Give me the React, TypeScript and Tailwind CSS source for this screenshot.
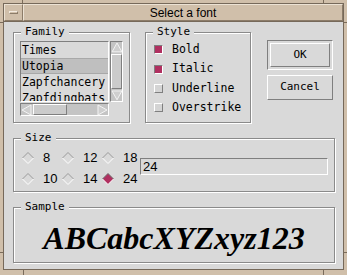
import React from 'react';

const mono = "font-['DejaVu_Sans_Mono',monospace]";
const sans = "font-['Liberation_Sans',Arial,sans-serif]";

const raised = 'border border-t-white border-l-white border-b-[#7f7f7f] border-r-[#7f7f7f]';
const sunken = 'border border-t-[#7f7f7f] border-l-[#7f7f7f] border-b-white border-r-white';
const groove = 'border border-[#8a8a8a] shadow-[inset_1px_1px_0_#fff,1px_1px_0_#fff]';

function Group({ label, className, children }: { label: string; className: string; children?: React.ReactNode }) {
  return (
    <div className={`relative ${groove} ${className}`}>
      <span className={`absolute -top-[8px] left-[7px] bg-[#d9d9d9] px-[4px] text-[11px] leading-[14px] text-black ${mono}`}>
        {label}
      </span>
      {children}
    </div>
  );
}

function Arrow({ dir }: { dir: 'up' | 'down' | 'left' | 'right' }) {
  const pts = {
    up: '6,1 11,10 1,10',
    down: '1,2 11,2 6,11',
    left: '1,6 10,1 10,11',
    right: '2,1 11,6 2,11',
  }[dir];
  return (
    <svg width="12" height="12" viewBox="0 0 12 12" className="block">
      <polygon points={pts} fill="#cfcfcf" stroke="#f4f4f4" strokeWidth="1" />
    </svg>
  );
}

function Check({ on, label }: { on: boolean; label: string }) {
  return (
    <div className="flex h-[19.4px] items-center">
      <div
        className={`h-[9px] w-[9px] ${on ? 'bg-[#b03060] ' + sunken : 'bg-[#d4d4d4] ' + raised}`}
      />
      <span className={`ml-[9px] text-[11.5px] ${mono}`}>{label}</span>
    </div>
  );
}

function Radio({ on, label }: { on: boolean; label: string }) {
  return (
    <div className="flex h-[19px] items-center">
      <svg width="12" height="12" viewBox="0 0 12 12" className="block">
        <polygon points="6,0.5 11.5,6 6,11.5 0.5,6" fill={on ? '#b03060' : '#d9d9d9'} />
        <polyline points="0.5,6 6,0.5 11.5,6" fill="none" stroke={on ? '#6a6a6a' : '#9a9a9a'} />
        <polyline points="0.5,6 6,11.5 11.5,6" fill="none" stroke="#ffffff" />
      </svg>
      <span className={`ml-[9px] text-[13px] ${sans}`}>{label}</span>
    </div>
  );
}

export default function App() {
  return (
    <div className="relative h-[275px] w-[347px] bg-[#d0bfaa] pb-[5px] pl-[3px] pr-[3px] pt-[3px]">
      {/* frame ticks */}
      <div className="absolute left-[22px] top-0 h-[3px] w-[1px] bg-[#7a6b5a]" />
      <div className="absolute left-[323px] top-0 h-[3px] w-[1px] bg-[#7a6b5a]" />
      <div className="absolute bottom-0 left-[23px] h-[5px] w-[1px] bg-[#7a6b5a]" />
      <div className="absolute bottom-0 left-[323px] h-[5px] w-[1px] bg-[#7a6b5a]" />
      <div className="absolute left-0 top-[22px] h-[1px] w-[3px] bg-[#7a6b5a]" />
      <div className="absolute left-0 top-[252px] h-[1px] w-[3px] bg-[#7a6b5a]" />
      <div className="absolute right-0 top-[22px] h-[1px] w-[3px] bg-[#7a6b5a]" />
      <div className="absolute right-0 top-[252px] h-[1px] w-[3px] bg-[#7a6b5a]" />

      <div className="flex h-full w-full flex-col border border-[#76695a]">
        {/* title bar */}
        <div className="flex h-[18px] border-b border-[#76695a]">
          <div className="flex w-[19px] items-center justify-center border border-b-[#8c7c69] border-l-[#ece2d4] border-r-[#8c7c69] border-t-[#ece2d4]">
            <div className="h-[3px] w-[9px] border border-b-[#8c7c69] border-l-[#f3ebe0] border-r-[#8c7c69] border-t-[#f3ebe0]" />
          </div>
          <div
            className={`flex flex-1 items-center justify-center border border-b-[#8c7c69] border-l-[#ece2d4] border-r-[#8c7c69] border-t-[#ece2d4] text-[12px] text-black ${sans}`}
          >
            Select a font
          </div>
        </div>

        {/* content */}
        <div className="flex-1 bg-[#d9d9d9] pl-[9px] pt-[10px]">
          <div className="flex">
            <Group label="Family" className="h-[91px] w-[117px] pl-[6px] pt-[8px]">
              <div className="flex">
                <div className={`h-[61px] w-[89px] overflow-hidden ${sunken} text-[11.5px] leading-[16px] ${mono}`}>
                  <div className="h-[16px] pl-[1px]">Times</div>
                  <div className="h-[16px] border-y border-[#a8a8a8] bg-[#bfbfbf] pl-[1px] leading-[14px]">Utopia</div>
                  <div className="h-[16px] whitespace-nowrap pl-[1px]">Zapfchancery</div>
                  <div className="h-[16px] whitespace-nowrap pl-[1px]">Zapfdingbats</div>
                </div>
                <div className={`ml-[1px] flex h-[61px] w-[13px] flex-col bg-[#c4c4c4] ${sunken}`}>
                  <Arrow dir="up" />
                  <div className={`h-[36px] w-full bg-[#cbcbcb] ${raised}`} />
                  <div className="flex-1" />
                  <Arrow dir="down" />
                </div>
              </div>
              <div className={`mt-[1px] flex h-[13px] w-[89px] bg-[#c4c4c4] ${sunken}`}>
                <Arrow dir="left" />
                <div className={`h-full w-[34px] bg-[#cbcbcb] ${raised}`} />
                <div className="flex-1" />
                <Arrow dir="right" />
              </div>
            </Group>

            <Group label="Style" className="ml-[15px] h-[91px] w-[106px] pl-[8px] pt-[7px]">
              <Check on label="Bold" />
              <Check on label="Italic" />
              <Check on={false} label="Underline" />
              <Check on={false} label="Overstrike" />
            </Group>

            <div className="ml-[16px] mt-[8px] flex w-[66px] flex-col">
              <div className={`h-[30px] p-[2px] ${sunken}`}>
                <button className={`flex h-full w-full items-center justify-center bg-[#d9d9d9] text-[11px] ${raised} ${mono}`}>
                  OK
                </button>
              </div>
              <button className={`mt-[5px] flex h-[25px] w-full items-center justify-center bg-[#d9d9d9] text-[11px] ${raised} ${mono}`}>
                Cancel
              </button>
            </div>
          </div>

          <Group label="Size" className="mt-[15px] flex h-[54px] w-[322px] pl-[8px] pt-[9px]">
            <div className="grid grid-cols-[40px_40px_38px]">
              <Radio on={false} label="8" />
              <Radio on={false} label="12" />
              <Radio on={false} label="18" />
              <Radio on={false} label="10" />
              <Radio on={false} label="14" />
              <Radio on label="24" />
            </div>
            <div className={`mt-[10px] h-[17px] w-[188px] pl-[2px] text-[13px] leading-[15px] ${sunken} ${sans}`}>24</div>
          </Group>

          <Group label="Sample" className="mt-[15px] flex h-[56px] w-[322px] items-center justify-center pt-[5px]">
            <span className="font-['Liberation_Serif',serif] text-[32px] font-bold italic leading-none text-black">
              ABCabcXYZxyz123
            </span>
          </Group>
        </div>
      </div>
    </div>
  );
}
